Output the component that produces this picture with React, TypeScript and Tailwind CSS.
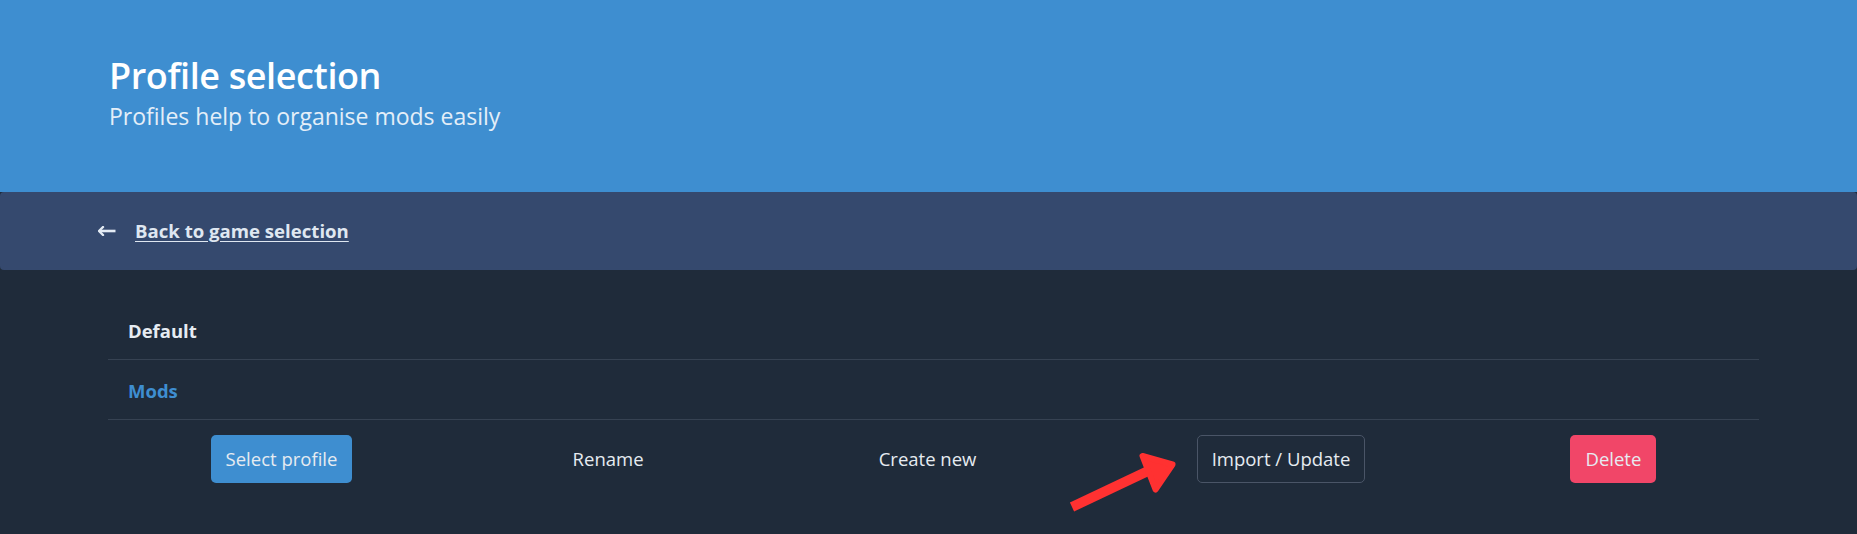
import React from "react";

const font = { fontFamily: '"Open Sans", "Noto Sans", sans-serif' };

function BackArrow() {
    return (
        <svg width="18" height="10" viewBox="0 0 18 10" className="block">
            <path d="M5 1 L1 5 L5 9" fill="none" stroke="#e4ebf4" strokeWidth="2.4" strokeLinejoin="round" strokeLinecap="round" />
            <path d="M1.5 5 H17.5" stroke="#e4ebf4" strokeWidth="2.6" />
        </svg>
    );
}

function PointerArrow() {
    return (
        <svg width="125" height="80" viewBox="0 0 125 80" className="absolute left-[1060px] top-[440px] pointer-events-none">
            <polygon points="9.9,62.5 14.1,71.5 90.1,35.5 85.9,26.5" fill="#ff3131" />
            <polygon points="82.5,16 112.5,24.5 95.5,49.5" fill="#ff3131" stroke="#ff3131" strokeWidth="6" strokeLinejoin="round" />
        </svg>
    );
}

export default function App() {
    let buttons = [
        { label: "Select profile", cls: "bg-[#3e8ed0] border-transparent" },
        { label: "Rename", cls: "bg-transparent border-transparent" },
        { label: "Create new", cls: "bg-transparent border-transparent" },
        { label: "Import / Update", cls: "bg-transparent border-[#4a5567]" },
        { label: "Delete", cls: "bg-[#f14668] border-transparent" },
    ];

    return (
        <main className="relative min-h-screen bg-[#1f2b3a]" style={font}>
            <section className="h-[192px] bg-[#3e8ed0] pl-[109px] pt-[54px]">
                <h1 className="text-[36px] leading-[44px] font-semibold tracking-[-0.4px] text-white">Profile selection</h1>
                <h2 className="mt-[3px] text-[23px] leading-[30px] text-[#e4eef8]">Profiles help to organise mods easily</h2>
            </section>

            <nav className="flex h-[78px] items-center rounded-[4px] bg-[#35496e] pl-[98px]">
                <BackArrow />
                <a href="#" className="ml-[19px] text-[18.6px] font-bold text-[#dfe7f1] underline underline-offset-[3px]">
                    Back to game selection
                </a>
            </nav>

            <div className="ml-[108px] mr-[98px] pt-[30px]">
                <div className="flex h-[60px] items-center border-b border-[#364252] pl-[20px] pt-[2px] text-[18.5px] font-bold text-[#e6ecf2]">
                    Default
                </div>
                <div className="flex h-[60px] items-center border-b border-[#364252] pl-[20px] pt-[2px] text-[18.5px] font-bold text-[#3e8ed0]">
                    Mods
                </div>
                <div className="mt-[15px] flex justify-around">
                    {buttons.map((b) => (
                        <button
                            key={b.label}
                            className={"h-[48px] rounded-[5px] border px-[14px] text-[18.5px] text-[#e6ebf1] " + b.cls}
                        >
                            {b.label}
                        </button>
                    ))}
                </div>
            </div>

            <PointerArrow />
        </main>
    );
}
